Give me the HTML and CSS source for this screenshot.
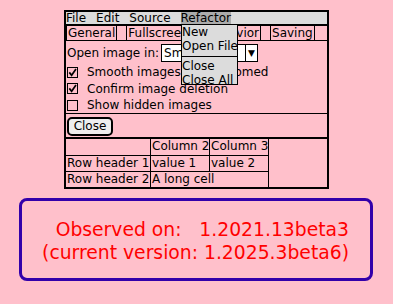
FILE: index.html
```html
<!DOCTYPE html>
<html lang="en">
<head>
    <title>Salt window</title>
    <link rel="stylesheet" href="styles.css">
</head>
<body>
    <div class="salt">
        <div class="menubar">
            <span class="menu-item">File</span>
            <span class="menu-item">Edit</span>
            <span class="menu-item">Source</span>
            <span class="menu-item active">Refactor</span>
        </div>
        <div class="submenu">
            <div class="sub-item">New</div>
            <div class="sub-item">Open File</div>
            <div class="sub-sep"></div>
            <div class="sub-item">Close</div>
            <div class="sub-item">Close All</div>
        </div>
        <div class="tabs">
            <span class="tab">General</span><span class="tab-gap"></span>
            <span class="tab tab-wide">Fullscreen</span><span class="tab-gap"></span>
            <span class="tab">Behavior</span><span class="tab-gap"></span>
            <span class="tab">Saving</span><span class="tab-gap last"></span>
        </div>
        <div class="options">
            <div class="field-row">
                <span>Open image in:</span>
                <div class="select">
                    <span class="select-value">Smart Mode</span>
                    <span class="select-arrow">&#9660;</span>
                </div>
            </div>
            <div class="check-row">
                <svg class="check" width="11" height="11" viewBox="0 0 11 11"><rect x="0.5" y="0.5" width="10" height="10" fill="none" stroke="#000"/><path d="M2.3 5.4 L4.6 8.3 L9 2" fill="none" stroke="#000" stroke-width="1.7"/></svg>
                <span>Smooth images when zoomed</span>
            </div>
            <div class="check-row">
                <svg class="check" width="11" height="11" viewBox="0 0 11 11"><rect x="0.5" y="0.5" width="10" height="10" fill="none" stroke="#000"/><path d="M2.3 5.4 L4.6 8.3 L9 2" fill="none" stroke="#000" stroke-width="1.7"/></svg>
                <span>Confirm image deletion</span>
            </div>
            <div class="check-row">
                <svg class="check" width="11" height="11" viewBox="0 0 11 11"><rect x="0.5" y="0.5" width="10" height="10" fill="none" stroke="#000"/></svg>
                <span>Show hidden images</span>
            </div>
        </div>
        <div class="actions">
            <button class="btn">Close</button>
        </div>
        <div class="grid">
            <div class="cell"></div>
            <div class="cell">Column 2</div>
            <div class="cell">Column 3</div>
            <div class="cell">Row header 1</div>
            <div class="cell">value 1</div>
            <div class="cell">value 2</div>
            <div class="cell last">Row header 2</div>
            <div class="cell last span2">A long cell</div>
        </div>
    </div>
    <div class="note">
        <div class="note-line"> Observed on:   1.2021.13beta3</div>
        <div class="note-line">(current version: 1.2025.3beta6)</div>
    </div>
</body>
</html>
```
FILE: styles.css
```css
body {
    margin: 0;
    padding-top: 10px;
    background-color: #ffc0cb;
    font-family: "DejaVu Sans", sans-serif;
    font-size: 12px;
    color: #000;
}
.salt {
    position: relative;
    box-sizing: border-box;
    width: 265px;
    margin-left: 64px;
    border: 2px solid #000;
}
.menubar {
    display: flex;
    gap: 10px;
    height: 12px;
    line-height: 12px;
    background-color: #dcdcdc;
    border-bottom: 1px solid #000;
}
.menu-item.active {
    background-color: #ababab;
}
.submenu {
    position: absolute;
    left: 115px;
    top: 12px;
    box-sizing: border-box;
    width: 57px;
    height: 61px;
    padding-top: 1px;
    background-color: #dcdcdc;
    border: 1px solid #000;
    line-height: 13.5px;
    white-space: nowrap;
    z-index: 2;
}
.sub-sep {
    margin: 3px -1px 3px -1px;
    border-top: 1px solid #000;
}
.tabs {
    display: flex;
    box-sizing: border-box;
    height: 16px;
    border-top: 1px solid #000;
    border-bottom: 1px solid #000;
    line-height: 14px;
}
.tab {
    padding: 0 1px;
    border-left: 1px solid #000;
    border-right: 1px solid #000;
}
.tab-wide {
    padding-right: 5px;
}
.tab-gap {
    width: 9px;
}
.tab-gap.last {
    flex: 1;
}
.options {
    padding: 3px 0 0 1px;
    height: 69px;
}
.field-row {
    display: flex;
    align-items: center;
    gap: 2px;
    height: 18px;
    margin-bottom: 2px;
}
.select {
    display: flex;
    height: 18px;
}
.select-value {
    box-sizing: border-box;
    width: 85px;
    padding-left: 2px;
    background-color: #fff;
    border: 1px solid #000;
    line-height: 16px;
    overflow: hidden;
}
.select-arrow {
    box-sizing: border-box;
    width: 12px;
    background-color: #fff;
    border: 1px solid #000;
    border-left: none;
    font-size: 9px;
    line-height: 16px;
    text-align: center;
}
.check-row {
    display: flex;
    align-items: center;
    gap: 9px;
    height: 16.5px;
}
.actions {
    padding: 3px 0 1px 1px;
    border-top: 1px solid #000;
    border-bottom: 2px solid #000;
}
.btn {
    display: block;
    box-sizing: border-box;
    width: 46px;
    height: 19px;
    padding: 0;
    background-color: #eeeeee;
    border: 2px solid #000;
    border-radius: 5px;
    font-family: "DejaVu Sans", sans-serif;
    font-size: 12px;
    line-height: 15px;
    color: #000;
}
.grid {
    display: grid;
    grid-template-columns: 85px 59px 59px;
    grid-template-rows: 17px 16px 15px;
}
.cell {
    box-sizing: border-box;
    padding-left: 1px;
    border-right: 1px solid #000;
    border-bottom: 1px solid #000;
    line-height: 15px;
    white-space: nowrap;
}
.cell.last {
    border-bottom: none;
}
.span2 {
    grid-column: span 2;
}
.note {
    box-sizing: border-box;
    width: 354px;
    height: 83px;
    margin: 9px 0 0 19px;
    padding: 18px 21px 0 0;
    border: 3px solid #3300aa;
    border-radius: 8px;
    color: #ff0000;
    font-size: 18.75px;
    line-height: 22.5px;
    text-align: right;
}
.note-line {
    white-space: pre;
}
```
